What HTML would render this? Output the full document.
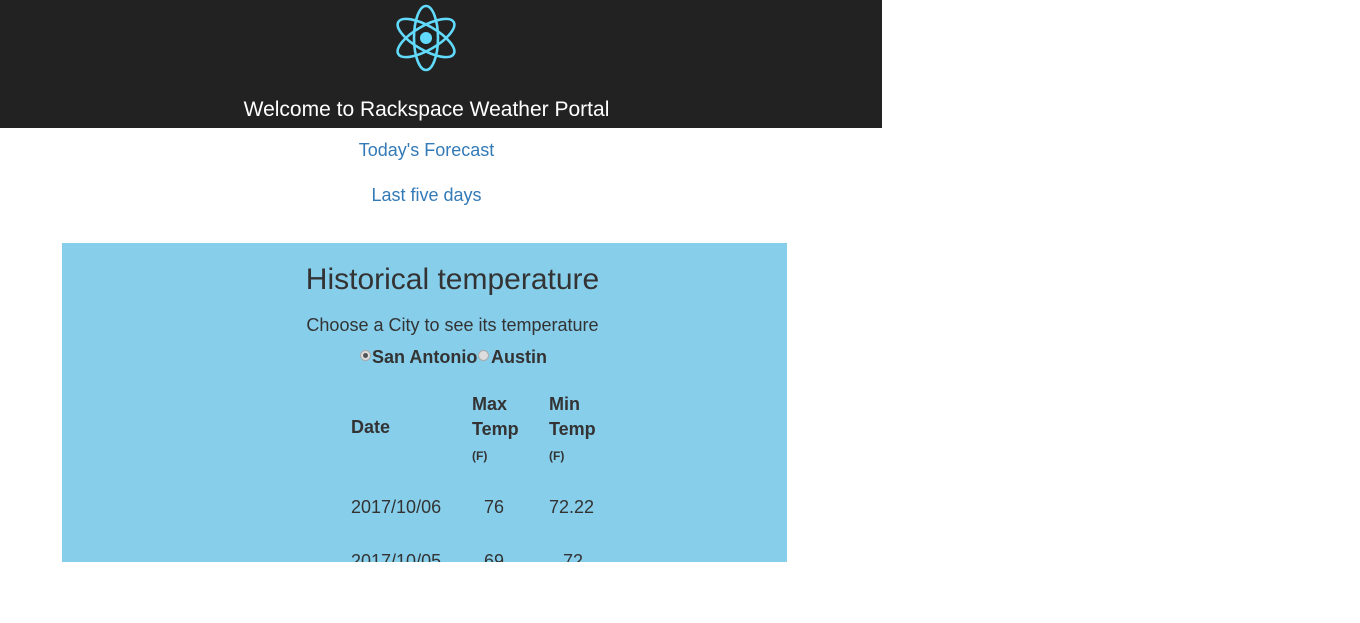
<!DOCTYPE html>
<html><head><meta charset="utf-8"><style>
body{margin:0;width:1360px;height:623px;background:#fff;font-family:"Liberation Sans",Arial,sans-serif;color:#333;position:relative;overflow:hidden}
.hdr{position:absolute;left:0;top:0;width:882px;height:128px;background:#222}
.hdr .t{position:absolute;left:0;width:853px;top:98px;text-align:center;color:#fff;font-size:21px}
a{color:#337ab7;text-decoration:none;position:absolute;font-size:18px;width:853px;text-align:center;left:0}
.box{position:absolute;left:62px;top:243px;width:725px;height:319px;background:#87ceeb;overflow:hidden}
.h{position:absolute;left:0;width:781px;text-align:center;top:20px;font-size:30px;left:0}
.c{position:absolute;width:781px;text-align:center;top:72px;font-size:18px}
.r{position:absolute;top:104px;font-size:18px;font-weight:bold}
.rad{position:absolute;width:11px;height:11px;border-radius:50%;background:#ddd;border:1px solid #aaa;box-sizing:border-box;top:107px}
.tx{position:absolute;font-size:18px}
.b{font-weight:bold}
.s{font-size:12px;font-weight:bold}
</style></head><body>
<div class="hdr">
<svg style="position:absolute;left:394px;top:4px" width="64" height="68" viewBox="-32 -34 64 68">
<g fill="none" stroke="#61dafb" stroke-width="2.6">
<ellipse rx="32" ry="12" transform="rotate(90)"/>
<ellipse rx="32" ry="12" transform="rotate(30)"/>
<ellipse rx="32" ry="12" transform="rotate(150)"/>
</g><circle r="6" fill="#61dafb"/></svg>
<div class="t">Welcome to Rackspace Weather Portal</div>
</div>
<a style="top:140px">Today's Forecast</a>
<a style="top:185px">Last five days</a>
<div class="box">
<div class="h">Historical temperature</div>
<div class="c">Choose a City to see its temperature</div>
<div class="rad" style="left:298px"><div style="width:5px;height:5px;background:#555;border-radius:50%;margin:2px"></div></div>
<div class="r" style="left:310px">San Antonio</div>
<div class="rad" style="left:416px"></div>
<div class="r" style="left:429px">Austin</div>
<div class="tx b" style="left:289px;top:174px">Date</div>
<div class="tx b" style="left:410px;top:149px;line-height:25px">Max<br>Temp</div>
<div class="tx b" style="left:487px;top:149px;line-height:25px">Min<br>Temp</div>
<div class="s" style="position:absolute;left:410px;top:206px">(F)</div>
<div class="s" style="position:absolute;left:487px;top:206px">(F)</div>
<div class="tx" style="left:289px;top:254px">2017/10/06</div>
<div class="tx" style="left:422px;top:254px">76</div>
<div class="tx" style="left:487px;top:254px">72.22</div>
<div class="tx" style="left:289px;top:308px">2017/10/05</div>
<div class="tx" style="left:422px;top:308px">69</div>
<div class="tx" style="left:501px;top:308px">72</div>
</div>
</body></html>
